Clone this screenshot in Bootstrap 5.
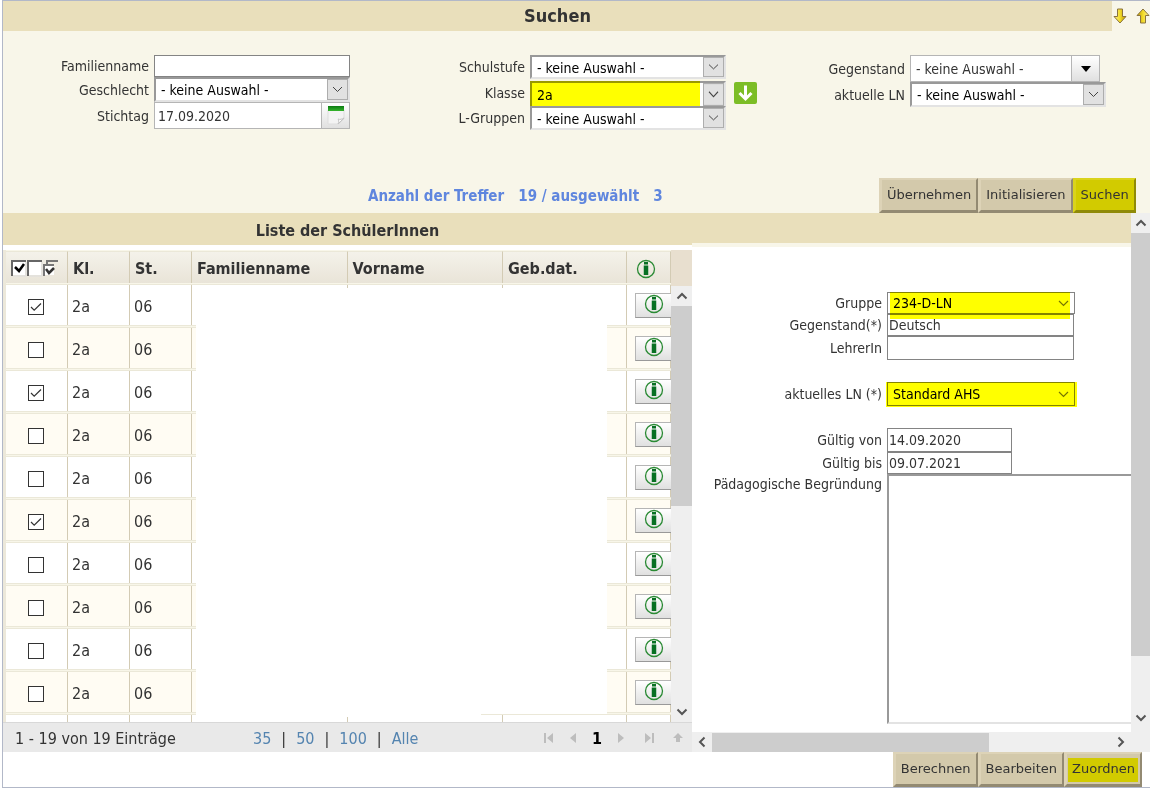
<!DOCTYPE html>
<html lang="de">
<head>
<meta charset="utf-8">
<meta name="viewport" content="width=device-width, initial-scale=1">
<title>Suchen</title>
<link href="https://cdn.jsdelivr.net/npm/bootstrap@5.3.0/dist/css/bootstrap.min.css" rel="stylesheet">
<style>
  :root { --sand: #e9dfbb; --cream: #f8f6e9; --rule: #ebe8d8; --line: #d3cbb4; --ink: #333; }
  body { font-family: "DejaVu Sans Condensed", "DejaVu Sans", sans-serif; font-stretch: condensed; font-size: 14px; line-height: 20px; color: var(--ink); background: #fff; overflow: hidden; }
  .frame { margin-left: 2px; border: solid #b2b8c8; border-width: 1px 0 1px 1px; }
  .bar-title { background: var(--sand); font-weight: 700; font-size: 16px; }
  .top-title { height: 30px; font-size: 18px; }
  .cream { background: var(--cream); }
  .arrows { width: 38px; padding-left: 1px; gap: 9px; overflow: hidden; }

  /* form fields */
  .criteria { display: grid; grid-template-columns: 376fr 380fr 391fr; padding-top: 24px; height: 147px; }
  .line { display: flex; align-items: center; height: 25px; }
  .line > label { width: 146px; margin-right: 5px; text-align: right; flex: none; white-space: nowrap; }
  .line.h22 { height: 22px; } .line.h24 { height: 24px; } .line.h27 { height: 27px; }
  .field { position: relative; width: 196px; height: 100%; }
  .field input, .field select { width: 100%; height: 100%; border-radius: 0; background-color: #fff; color: var(--ink); padding: 0 3px; border: 1px solid #848484; display: block; }
  .field select { appearance: none; color: #000; padding: 0 5px; background-repeat: no-repeat; }
  .field select.sunk { padding: 1px 5px 0; border: 2px solid; border-color: #999 #e3e3e3 #e3e3e3 #999; background-position: right 0 center; background-size: 21px 100%;
    background-image: url("data:image/svg+xml,%3Csvg xmlns='http://www.w3.org/2000/svg' viewBox='0 0 21 21' preserveAspectRatio='none'%3E%3Crect x='.5' y='.5' width='20' height='20' fill='%23e1e1e1' stroke='%23adadad'/%3E%3Cpath d='M6 8l4.500 4.500L15 8' fill='none' stroke='%23444'/%3E%3C/svg%3E"); }
  .field select.flat { background-position: right 5px center; background-size: 11px 7px;
    background-image: url("data:image/svg+xml,%3Csvg xmlns='http://www.w3.org/2000/svg' viewBox='0 0 11 7'%3E%3Cpath d='M1 1l4.500 4.500L10 1' fill='none' stroke='%23777' stroke-width='1.200'/%3E%3C/svg%3E"); }
  .field.combo { display: flex; border: 1px solid #b5b5b5; background: #fff; }
  .field.combo > input, .field.combo > select { border: 0; flex: 1; min-width: 0; width: auto; color: var(--ink); background: transparent; }
  .field.combo > button, .field.combo > .drop { width: 28px; flex: none; border: 0; border-left: 1px solid #b5b5b5; padding: 0; display: flex; align-items: center; justify-content: center; background: linear-gradient(#fff, #e0e0e0); }
  .field.w190 { width: 190px; }
  .marker { position: absolute; inset: 0; background: #ff0; mix-blend-mode: multiply; pointer-events: none; }
  .marker.m-klasse { right: 26px; }
  .marker.m-gruppe { inset: 0 5px -5px 3px; z-index: 1; }
  .marker.m-niveau { inset: 0 -2px -1px -1px; }

  .classic { font-family: "DejaVu Sans", sans-serif; font-stretch: normal; font-size: 13px; line-height: 20px; color: var(--ink); background: #d3c9ab; border: 3px solid; border-color: #ddd3b7 #938a72 #938a72 #ddd3b7; border-width: 2px 2px 3px 3px; padding: 5px; height: 35px; border-radius: 0; white-space: nowrap; }
  .classic.hot { background: #d2cb00; border-color: #dad31c #8f8a08 #8f8a08 #dad31c; }
  .classic.warm { background: linear-gradient(#d2cb00, #d2cb00) 1px 4px / calc(100% - 3px) calc(100% - 6px) no-repeat #d3c9ab; }
  .hits { color: #5f86de; font-weight: 700; font-size: 15px; white-space: pre; }
  .status { display: grid; grid-template-columns: 876fr 271fr; height: 35px; }

  /* lower area */
  .panes { display: grid; grid-template-columns: minmax(0, 689fr) minmax(0, 439fr) 19px; }
  .pane-head { height: 32px; }
  .white-gap { height: 5px; }
  .list-body { height: 472px; overflow: hidden; padding-left: 3px; background: linear-gradient(90deg, #ece8da 3px, #fff 3px); }
  .listwrap { position: relative; flex: 1; min-width: 0; }
  .pupils { table-layout: fixed; width: 100%; border-collapse: separate; border-spacing: 0 1px; background: var(--cream); font-size: 16px; }
  .pupils th { height: 32px; padding: 2px 0 0 5px; background: linear-gradient(#f4f2ea, #e9e4d8); border-right: 1px solid var(--line); border-top: 1px solid var(--rule); white-space: nowrap; }
  .pupils td { height: 42px; padding: 3px 0 0 4px; background: #fff; border: solid var(--rule); border-width: 1px 0; box-shadow: inset -1px 0 var(--line); }
  .pupils tr:nth-child(even) td { background: #fffcf3; }
  .pupils td:first-child { padding: 0 0 0 4px; }
  .pupils td:last-child { padding: 0; }
  .tick { appearance: none; width: 16px; height: 16px; margin: 4px 0 0 18px; border: 1px solid #333; background: #fff center / 12px no-repeat; display: block; }
  .tick:checked { background-image: url("data:image/svg+xml,%3Csvg xmlns='http://www.w3.org/2000/svg' viewBox='0 0 12 12'%3E%3Cpath d='M1 6l3.200 3.200L11 2.500' fill='none' stroke='%23333' stroke-width='1.200'/%3E%3C/svg%3E"); }
  .info { display: flex; justify-content: center; align-items: flex-start; width: 36px; height: 25px; margin-left: 8px; padding: 0; border: 1px solid #b5b5b5; border-width: 1px 0 1px 1px; border-bottom-color: #999; background: linear-gradient(#fff, #e0e0e0); }
  .blank { position: absolute; inset: 38px 64px 5px 190px; background: #fff; clip-path: polygon(0 0, 100% 0, 100% calc(100% - 3px), 285px calc(100% - 3px), 285px 100%, 0 100%); }
  .vbar { display: flex; flex-direction: column; align-items: center; background: #efefef; }
  .vbar .thumb { width: 100%; background: #cdcdcd; }
  .list-side { width: 21px; }
  .list-side .cap { height: 36px; background: #e8dfcf; }
  .vbar .end, .hbar .end { flex: none; display: flex; align-items: center; justify-content: center; width: 20px; height: 20px; }
  .hbar { display: flex; height: 20px; align-items: center; background: #efefef; }
  .hbar .thumb { height: 19px; width: 63%; background: #cdcdcd; }
  .pager { height: 30px; border-top: 1px solid #d8d8d8; background: #e9e9e9; font-size: 16px; padding: 6px 9px 0 12px; }
  .pager .count { width: 238px; }
  .pager .sizes { gap: 10px; }
  .pager .steps { gap: 15px; }
  .pager a { color: #5484b0; text-decoration: none; }
  .pager button { border: 0; padding: 4px 0 0; background: none; display: flex; }

  .detail { height: 485px; padding-top: 45px; overflow: hidden; }
  .detail .line > label { width: 190px; }
  .detail .field { width: 188px; }
  .detail .field input { padding: 0 1px; }
  .detail .field.short { width: 125px; }
  .detail .field.mid { width: 187px; }
  .detail .apart { margin-top: 22px; }
  .reason { flex: none; width: 280px; height: 250px; resize: none; border: 2px solid; border-color: #999 #e3e3e3 #e3e3e3 #999; border-radius: 0; padding: 3px; }
</style>
</head>
<body>
<svg width="0" height="0" class="position-absolute" aria-hidden="true">
  <symbol id="i-info" viewBox="0 0 20 20"><circle cx="10" cy="10" r="8.500" fill="none" stroke="#2a8a34" stroke-width="1.300"/><path d="M8 3h4v2.500H8zM8 6.500h4V16H8z" fill="#087023"/><path d="M7 6.500h1V16H7zM12 6.500h1V16h-1z" fill="#087023" opacity=".25"/></symbol>
  <symbol id="i-up" viewBox="0 0 12 8"><path d="M1.500 6.500L6 2l4.500 4.500" fill="none" stroke="#555" stroke-width="2"/></symbol>
  <symbol id="i-down" viewBox="0 0 12 8"><path d="M1.500 1.500L6 6l4.500-4.500" fill="none" stroke="#555" stroke-width="2"/></symbol>
  <symbol id="i-gold" viewBox="0 0 14 16"><linearGradient id="gold"><stop offset="0" stop-color="#fbf08a"/><stop offset=".5" stop-color="#f3dc2a"/><stop offset="1" stop-color="#b89400"/></linearGradient><path d="M4.500 1h5v7.500H13L7 15 1 8.500h3.500z" fill="url(#gold)" stroke="#8a7340"/></symbol>
</svg>

<main class="frame">
  <header class="d-flex cream">
    <h1 class="bar-title top-title flex-fill d-flex align-items-center justify-content-center m-0">Suchen</h1>
    <div class="arrows d-flex align-items-center">
      <svg width="14" height="16" class="flex-shrink-0"><use href="#i-gold"/></svg>
      <svg width="14" height="16" class="flex-shrink-0"><g transform="rotate(180 7 8)"><use href="#i-gold"/></g></svg>
    </div>
  </header>

  <form class="cream" onsubmit="return false">
    <div class="criteria">
      <div>
        <div class="line h22"><label for="fam">Familienname</label><div class="field"><input id="fam" type="text"></div></div>
        <div class="line"><label for="sex">Geschlecht</label><div class="field"><select id="sex" class="sunk"><option>- keine Auswahl -</option></select></div></div>
        <div class="line h27"><label for="day">Stichtag</label>
          <div class="field combo"><input id="day" type="text" value="17.09.2020">
            <button type="button" aria-label="Kalender"><svg width="18" height="19"><defs><linearGradient id="cal" x2="0" y2="1"><stop offset="0" stop-color="#0b7a12"/><stop offset="1" stop-color="#35b52c"/></linearGradient></defs><path d="M1 4h16v9l-5 5H1z" fill="#f3f3f3" stroke="#ddd"/><path d="M17 12l-6 6c1-2 1-4 0-5 2 1 4 0 6-1z" fill="#fff" stroke="#c3c3c3"/><rect x="1" width="16" height="5" fill="url(#cal)"/></svg></button></div></div>
      </div>
      <div>
        <div class="line h24"><label for="stufe">Schulstufe</label><div class="field"><select id="stufe" class="sunk"><option>- keine Auswahl -</option></select></div></div>
        <div class="line h27"><label for="klasse">Klasse</label><div class="field mt-1"><select id="klasse" class="sunk"><option>2a</option></select><span class="marker m-klasse"></span></div>
          <svg class="ms-2" width="23" height="22"><rect width="23" height="22" rx="2" fill="#7cbd26"/><path d="M11.500 3.500v13M5.500 11l6 6 6-6" fill="none" stroke="#fff" stroke-width="3"/></svg></div>
        <div class="line h24"><label for="lgr">L-Gruppen</label><div class="field"><select id="lgr" class="sunk"><option>- keine Auswahl -</option></select></div></div>
      </div>
      <div>
        <div class="line h27"><label for="geg">Gegenstand</label><div class="field combo w190"><select id="geg"><option>- keine Auswahl -</option></select><span class="drop"><svg width="10" height="6"><path d="M0 0h10L5 6z"/></svg></span></div></div>
        <div class="line"><label for="ln">aktuelle LN</label><div class="field"><select id="ln" class="sunk"><option>- keine Auswahl -</option></select></div></div>
      </div>
    </div>
    <div class="status">
      <div class="hits d-flex align-items-center justify-content-end"><span style="margin-right:24.700%">Anzahl der Treffer   19 / ausgewählt   3</span></div>
      <div class="d-flex align-items-start">
        <button type="button" class="classic">Übernehmen</button>
        <button type="button" class="classic">Initialisieren</button>
        <button type="submit" class="classic hot">Suchen</button>
      </div>
    </div>
  </form>

  <div class="panes">
    <section>
      <h2 class="bar-title pane-head d-flex align-items-center justify-content-center m-0 pt-1">Liste der SchülerInnen</h2>
      <div class="white-gap"></div>
      <div class="list-body d-flex">
        <div class="listwrap">
          <table class="pupils">
            <colgroup><col style="width:62px"><col style="width:62px"><col style="width:62px"><col><col><col style="width:124px"><col style="width:44px"></colgroup>
            <thead><tr>
              <th><svg width="48" height="18" fill="none"><path d="M1 16V1h14M17 16V1h14" stroke="#666" stroke-width="2"/><path d="M2 16h13V2M18 16h13V2" stroke="#ddd"/><path d="M2 2h12v13H2zM18 2h12v13H18z" fill="#fff"/><path d="M4 7l4 4 5-7" stroke="#000" stroke-width="2.500"/><path d="M36 7V1h11M33 16V5h10" stroke="#777" stroke-width="2"/><path d="M34 6h9v9h-9z" fill="#fff"/><path d="M35 9l3 4 5-5" stroke="#333" stroke-width="2.500"/></svg></th>
              <th>Kl.</th><th>St.</th><th>Familienname</th><th>Vorname</th><th>Geb.dat.</th>
              <th><svg width="20" height="20" class="ms-1"><use href="#i-info"/></svg></th>
            </tr></thead>
            <tbody id="rows"></tbody>
          </table>
          <div class="blank"></div>
        </div>
        <div class="list-side d-flex flex-column">
          <div class="cap"></div>
          <div class="vbar flex-fill">
            <span class="end"><svg width="12" height="8"><use href="#i-up"/></svg></span>
            <span class="thumb" style="height:200px"></span>
            <span class="end mt-auto"><svg width="12" height="8"><use href="#i-down"/></svg></span>
          </div>
        </div>
      </div>
      <div class="pager d-flex">
        <span class="count">1 - 19 von 19 Einträge</span>
        <span class="sizes d-flex"><a href="#">35</a><span>|</span><a href="#">50</a><span>|</span><a href="#">100</a><span>|</span><a href="#">Alle</a></span>
        <span class="steps ms-auto d-flex align-items-start">
          <button type="button" aria-label="Erste"><svg width="10" height="10" fill="#bdbdbd"><path d="M0 0h2v10H0zM9 0v10L3 5z"/></svg></button>
          <button type="button" aria-label="Zurück"><svg width="8" height="10" fill="#bdbdbd"><path d="M7 0v10L1 5z"/></svg></button>
          <b class="text-black">1</b>
          <button type="button" aria-label="Weiter"><svg width="8" height="10" fill="#bdbdbd"><path d="M1 0v10l6-5z"/></svg></button>
          <button type="button" aria-label="Letzte" class="ms-1"><svg width="10" height="10" fill="#bdbdbd"><path d="M8 0h2v10H8zM1 0v10l6-5z"/></svg></button>
          <button type="button" aria-label="Nach oben" class="ms-1"><svg width="10" height="10" fill="#bdbdbd"><path d="M5 0l5 5H7v4H3V5H0z"/></svg></button>
        </span>
      </div>
    </section>

    <section>
      <div class="bar-title" style="height:30px"></div>
      <div class="cream pt-1"></div>
      <div class="detail">
        <div class="line h22"><label for="gruppe">Gruppe</label><div class="field"><select id="gruppe" class="flat"><option>234-D-LN</option></select><span class="marker m-gruppe"></span></div></div>
        <div class="line h22"><label for="fach">Gegenstand(*)</label><div class="field mid"><input id="fach" type="text" value="Deutsch"></div></div>
        <div class="line h24"><label for="lehrer">LehrerIn</label><div class="field mid"><input id="lehrer" type="text"></div></div>
        <div class="line h24 apart"><label for="niveau">aktuelles LN (*)</label><div class="field"><select id="niveau" class="flat"><option>Standard AHS</option></select><span class="marker m-niveau"></span></div></div>
        <div class="line h24 apart"><label for="von">Gültig von</label><div class="field short"><input id="von" type="text" value="14.09.2020"></div></div>
        <div class="line h22"><label for="bis">Gültig bis</label><div class="field short"><input id="bis" type="text" value="09.07.2021"></div></div>
        <div class="line h-auto align-items-start"><label for="grund">Pädagogische Begründung</label><textarea id="grund" class="reason"></textarea></div>
      </div>
      <div class="hbar">
        <span class="end"><svg width="8" height="12"><path d="M6.500 1.500L2 6l4.500 4.500" fill="none" stroke="#555" stroke-width="2"/></svg></span>
        <span class="thumb"></span>
        <span class="end ms-auto"><svg width="8" height="12"><path d="M1.500 1.500L6 6l-4.500 4.500" fill="none" stroke="#555" stroke-width="2"/></svg></span>
      </div>
    </section>

    <div class="vbar">
      <span class="end"><svg width="12" height="8"><use href="#i-up"/></svg></span>
      <span class="thumb" style="height:423px"></span>
      <span class="end mt-auto mb-4"><svg width="12" height="8"><use href="#i-down"/></svg></span>
    </div>
  </div>

  <footer class="d-flex justify-content-end pe-2">
    <button type="button" class="classic">Berechnen</button>
    <button type="button" class="classic">Bearbeiten</button>
    <button type="button" class="classic warm">Zuordnen</button>
  </footer>
</main>

<script>
  const chosen = [0, 2, 5];
  document.getElementById('rows').innerHTML = Array.from({ length: 11 }, (_, i) => `
    <tr><td><input type="checkbox" class="tick" aria-label="Zeile ${i + 1}" ${chosen.includes(i) ? 'checked' : ''}></td>
    <td>${i < 10 ? '2a' : ''}</td><td>${i < 10 ? '06' : ''}</td><td></td><td></td><td></td>
    <td><button type="button" class="info" aria-label="Info"><svg width="20" height="20"><use href="#i-info"/></svg></button></td></tr>`).join('');
</script>
<script src="https://cdn.jsdelivr.net/npm/bootstrap@5.3.0/dist/js/bootstrap.bundle.min.js"></script>
</body>
</html>
